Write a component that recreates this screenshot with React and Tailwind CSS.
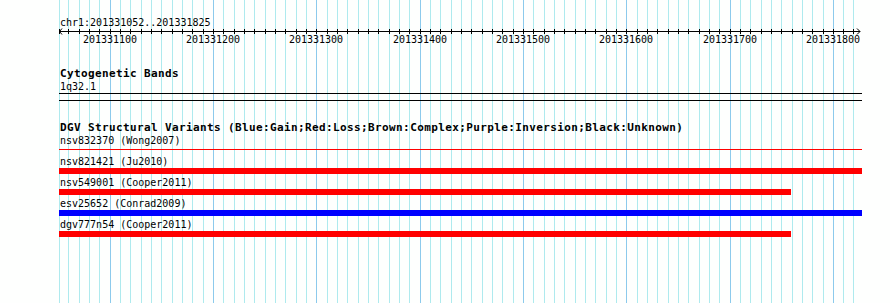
import React from "react";

// GBrowse-style detail panel: ruler, cytoband track and DGV variants.
// Pixel scale fitted from the label ticks (100 bp ~ 103.3 px).
const px = (bp) => Math.max(59, Math.floor(110.3 + (bp - 201331100) * 1.0329));

const GRID = [];
for (let bp = 201331050; bp <= 201331820; bp += 10) GRID.push(bp);
const LABELS = [100, 200, 300, 400, 500, 600, 700, 800].map((n) => 201331000 + n);

const LEFT = 59;
const RIGHT = 862;

const VARIANTS = [
  { label: "nsv821421 (Ju2010)", bar: "bg-[#ff0000]", end: 862 },
  { label: "nsv549001 (Cooper2011)", bar: "bg-[#ff0000]", end: 791 },
  { label: "esv25652 (Conrad2009)", bar: "bg-[#0000ff]", end: 862 },
  { label: "dgv777n54 (Cooper2011)", bar: "bg-[#ff0000]", end: 791 },
];

function Grid() {
  return (
    <svg className="absolute inset-0 pointer-events-none" width="890" height="303">
      {GRID.map((bp) => {
        const x = px(bp) + 0.5;
        const major = bp % 100 === 0;
        return (
          <line key={bp} x1={x} x2={x} y1="0" y2="303"
            stroke={major ? "#8ccaec" : "#aeeaee"} strokeWidth="1" />
        );
      })}
    </svg>
  );
}

function Ruler() {
  const w = RIGHT - LEFT;
  return (
    <div className="pt-[17px]">
      <div className="text-[10px] leading-[11px] pl-px">chr1:201331052..201331825</div>
      <div className="relative h-[6px]">
        <svg className="absolute left-0 top-0 overflow-visible" width={w} height="6">
          <line x1="0" x2={w - 2} y1="3.5" y2="3.5" stroke="#000" strokeWidth="1" />
          <polyline points="3,0.5 0.5,3.5 3,6.5" fill="none" stroke="#000" strokeWidth="1" />
          <polyline points={`${w - 5},0.5 ${w - 2},3.5 ${w - 5},6.5`} fill="none" stroke="#000" strokeWidth="1" />
          {GRID.map((bp) => {
            const x = px(bp) - LEFT + 0.5;
            return <line key={bp} x1={x} x2={x} y1="1" y2="6" stroke="#000" strokeWidth="1" />;
          })}
        </svg>
      </div>
      <div className="relative h-[11px]">
        {LABELS.map((bp) => (
          <span key={bp}
            className="absolute top-0 -translate-x-1/2 text-[10px] leading-[11px] whitespace-nowrap"
            style={{ left: px(bp) - LEFT }}>
            {bp}
          </span>
        ))}
      </div>
    </div>
  );
}

function TrackTitle({ children, className = "" }) {
  return (
    <div className={`font-bold text-[11px] leading-[11px] tracking-[0.38px] pl-px whitespace-nowrap ${className}`}>
      {children}
    </div>
  );
}

export default function App() {
  return (
    <div className="relative w-[890px] h-[303px] overflow-hidden bg-[#fefffe] text-black font-['DejaVu_Sans_Mono','Liberation_Mono',monospace]">
      <Grid />
      <div className="relative pl-[59px] w-[862px]">
        <Ruler />

        <TrackTitle className="mt-[23px]">Cytogenetic Bands</TrackTitle>
        <div className="mt-[2px] text-[10px] leading-[11px] pl-px">1q32.1</div>
        <div className="mt-px h-[8px] border-y border-black" />

        <TrackTitle className="mt-[21px]">
          DGV Structural Variants (Blue:Gain;Red:Loss;Brown:Complex;Purple:Inversion;Black:Unknown)
        </TrackTitle>
        <div className="mt-[2px] text-[10px] leading-[11px] pl-px">nsv832370 (Wong2007)</div>
        <div className="mt-[3px] h-px bg-[#ff0000]" />
        <div className="h-[6px]" />

        {VARIANTS.map((v) => (
          <div key={v.label} className="pb-[3px]">
            <div className="text-[10px] leading-[11px] pl-px">{v.label}</div>
            <div className={`mt-px h-[6px] ${v.bar}`} style={{ width: v.end - LEFT }} />
          </div>
        ))}
      </div>
    </div>
  );
}
